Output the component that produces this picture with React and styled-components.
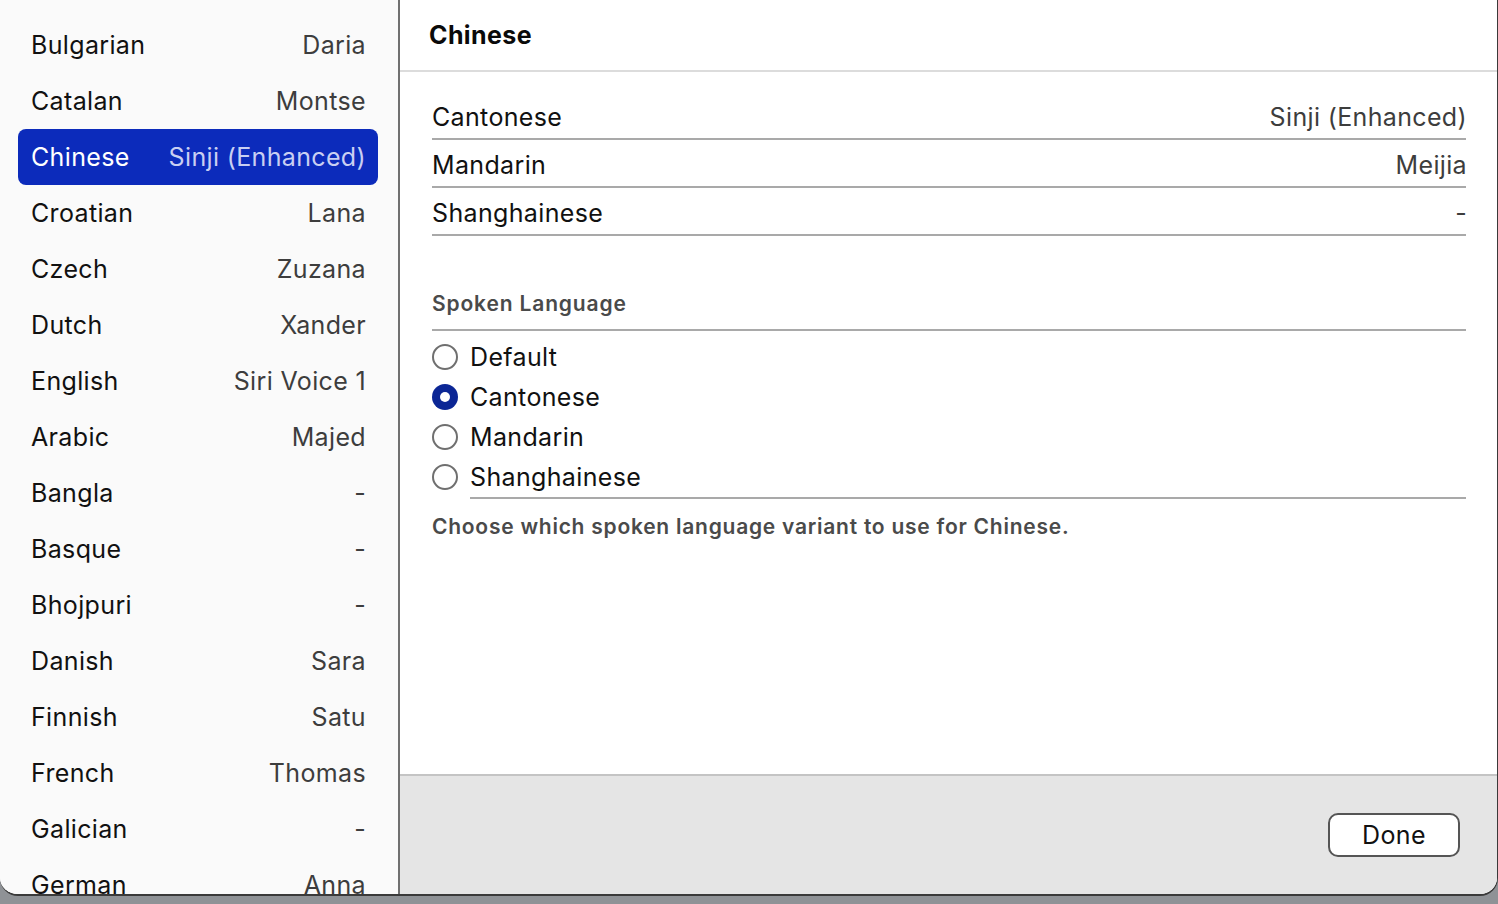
import React from "react";
import styled, { createGlobalStyle } from "styled-components";

const Global = createGlobalStyle`
  html, body { margin: 0; padding: 0; }
  body {
    background: #8f9296;
    font-family: Inter, "Noto Sans", "Liberation Sans", sans-serif;
    -webkit-font-smoothing: antialiased;
    overflow: hidden;
  }
`;

const Window = styled.div`
  width: 1498px;
  height: 896px;
  box-sizing: border-box;
  display: flex;
  background: #fff;
  border-bottom: 2px solid #3a3a3a;
  border-right: 1px solid #3a3a3a;
  border-radius: 0 0 18px 18px;
  overflow: hidden;
`;

const Sidebar = styled.div`
  width: 398px;
  flex: none;
  background: #fafafa;
  border-right: 2px solid #707070;
  padding-top: 17px;
  overflow: hidden;
`;

const ListRow = styled.div`
  height: 56px;
  margin: 0 20px 0 18px;
  padding: 0 12px 0 13px;
  display: flex;
  align-items: center;
  justify-content: space-between;
  border-radius: 8px;
  font-size: 25px;
  letter-spacing: 0.35px;
  background: ${(p) => (p.$selected ? "#0c2bbb" : "transparent")};
`;

const LangName = styled.span`
  color: ${(p) => (p.$selected ? "#ffffff" : "#111")};
`;

const VoiceName = styled.span`
  color: ${(p) => (p.$selected ? "#c9cff2" : "#3d3d3d")};
`;

const Main = styled.div`
  flex: 1;
  display: flex;
  flex-direction: column;
  min-width: 0;
`;

const Header = styled.div`
  height: 70px;
  display: flex;
  align-items: center;
  padding-left: 29px;
  border-bottom: 2px solid #dcdcdc;
  font-size: 25px;
  font-weight: 700;
  letter-spacing: 0.4px;
  color: #0a0a0a;
`;

const Content = styled.div`
  flex: 1;
  padding: 20px 31px 0 32px;
  display: flex;
  flex-direction: column;
`;

const TableRow = styled.div`
  height: 48px;
  box-sizing: border-box;
  padding: 4px 0 0 0;
  display: flex;
  align-items: center;
  justify-content: space-between;
  border-bottom: 2px solid #a9a9a9;
  font-size: 25px;
  letter-spacing: 0.35px;
  color: #111;
`;

const TableValue = styled.span`
  color: #3d3d3d;
  margin-right: -1px;
`;

const SectionTitle = styled.div`
  margin-top: 54px;
  height: 28px;
  line-height: 28px;
  padding-bottom: 11px;
  border-bottom: 2px solid #a9a9a9;
  font-size: 21px;
  font-weight: 600;
  letter-spacing: 0.85px;
  color: #4a4a4a;
`;

const RadioGroup = styled.div`
  margin-top: 6px;
  display: flex;
  flex-direction: column;
`;

const RadioRow = styled.label`
  display: flex;
  align-items: flex-start;
  gap: 12px;
  font-size: 25px;
  letter-spacing: 0.35px;
  color: #111;
`;

const RadioCircle = styled.span`
  width: 26px;
  height: 26px;
  margin-top: 7px;
  box-sizing: border-box;
  border-radius: 50%;
  flex: none;
  display: flex;
  align-items: center;
  justify-content: center;
  background: ${(p) => (p.$checked ? "#0b2695" : "#fff")};
  border: ${(p) => (p.$checked ? "none" : "2px solid #6f6f6f")};
  &::after {
    content: "";
    display: ${(p) => (p.$checked ? "block" : "none")};
    width: 10px;
    height: 10px;
    border-radius: 50%;
    background: #fff;
  }
`;

const RadioText = styled.span`
  flex: 1;
  height: 40px;
  display: flex;
  align-items: center;
  border-bottom: ${(p) => (p.$last ? "2px solid #a9a9a9" : "none")};
`;

const Description = styled.div`
  margin-top: 14px;
  line-height: 28px;
  font-size: 21px;
  font-weight: 600;
  letter-spacing: 0.75px;
  color: #4a4a4a;
`;

const Footer = styled.div`
  height: 118px;
  flex: none;
  background: #e5e5e5;
  border-top: 2px solid #c4c4c4;
  display: flex;
  align-items: center;
  justify-content: flex-end;
  padding-right: 37px;
`;

const Button = styled.button`
  width: 132px;
  height: 44px;
  box-sizing: border-box;
  border: 2px solid #555;
  border-radius: 10px;
  background: #fff;
  font-family: inherit;
  font-size: 25px;
  letter-spacing: 0.35px;
  color: #111;
  padding: 0;
`;

const languages = [
  ["Bulgarian", "Daria"],
  ["Catalan", "Montse"],
  ["Chinese", "Sinji (Enhanced)"],
  ["Croatian", "Lana"],
  ["Czech", "Zuzana"],
  ["Dutch", "Xander"],
  ["English", "Siri Voice 1"],
  ["Arabic", "Majed"],
  ["Bangla", "-"],
  ["Basque", "-"],
  ["Bhojpuri", "-"],
  ["Danish", "Sara"],
  ["Finnish", "Satu"],
  ["French", "Thomas"],
  ["Galician", "-"],
  ["German", "Anna"],
];

const variants = [
  ["Cantonese", "Sinji (Enhanced)"],
  ["Mandarin", "Meijia"],
  ["Shanghainese", "-"],
];

const spoken = ["Default", "Cantonese", "Mandarin", "Shanghainese"];

export default function App() {
  return (
    <>
      <Global />
      <Window>
        <Sidebar>
          {languages.map(([lang, voice]) => {
            const sel = lang === "Chinese";
            return (
              <ListRow key={lang} $selected={sel}>
                <LangName $selected={sel}>{lang}</LangName>
                <VoiceName $selected={sel}>{voice}</VoiceName>
              </ListRow>
            );
          })}
        </Sidebar>
        <Main>
          <Header>Chinese</Header>
          <Content>
            {variants.map(([name, voice]) => (
              <TableRow key={name}>
                <span>{name}</span>
                <TableValue>{voice}</TableValue>
              </TableRow>
            ))}
            <SectionTitle>Spoken Language</SectionTitle>
            <RadioGroup>
              {spoken.map((s, i) => (
                <RadioRow key={s}>
                  <RadioCircle $checked={s === "Cantonese"} />
                  <RadioText $last={i === spoken.length - 1}>{s}</RadioText>
                </RadioRow>
              ))}
            </RadioGroup>
            <Description>
              Choose which spoken language variant to use for Chinese.
            </Description>
          </Content>
          <Footer>
            <Button>Done</Button>
          </Footer>
        </Main>
      </Window>
    </>
  );
}
